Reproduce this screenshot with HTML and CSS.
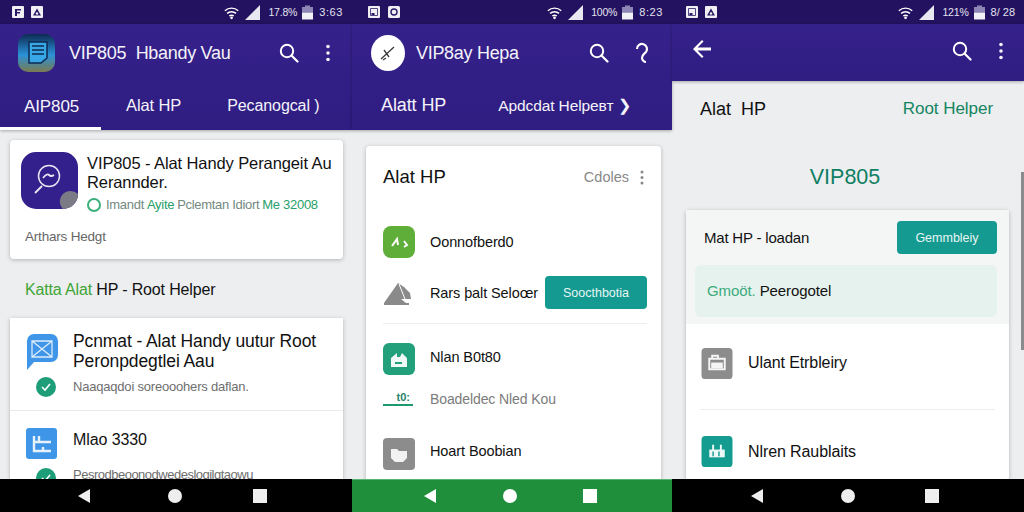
FILE: index.html
```html
<!DOCTYPE html>
<html lang="id">
<head>
<meta charset="utf-8">
<title>VIP805</title>
<link rel="stylesheet" href="styles.css">
</head>
<body>
<svg class="defs" width="0" height="0" aria-hidden="true">
  <symbol id="wifi" viewBox="0 0 18 16"><path d="M1 6a11 11 0 0 1 15 0M3.500 9a7.500 7.500 0 0 1 10 0M6 12a4 4 0 0 1 5 0" fill="none" stroke="#fff" stroke-width="1.600"/><circle cx="8.500" cy="14" r="1.500" fill="#fff"/></symbol>
  <symbol id="signal" viewBox="0 0 16 16"><path d="M0 16 16 0v16z" fill="#e8e8f0"/></symbol>
  <symbol id="battery" viewBox="0 0 11 14"><path d="M3 0h5v1.500h3V7H0V1.500h3z" fill="#8d86b4"/><path d="M0 7h11v7H0z" fill="#f2f2f6"/></symbol>
  <symbol id="search" viewBox="0 0 20 20"><circle cx="8" cy="8" r="6.200" fill="none" stroke="#fff" stroke-width="2"/><path d="m12.500 12.500 6 6" stroke="#fff" stroke-width="2.200" stroke-linecap="round"/></symbol>
  <symbol id="dots" viewBox="0 0 4 18"><circle cx="2" cy="2.500" r="1.800" fill="currentColor"/><circle cx="2" cy="9" r="1.800" fill="currentColor"/><circle cx="2" cy="15.500" r="1.800" fill="currentColor"/></symbol>
  <symbol id="back" viewBox="0 0 12 12"><path d="M0 6 6 0l1 1-4 4h9v2H3l4 4-1 1z" fill="#fff"/></symbol>
  <symbol id="tri" viewBox="0 0 12 14"><path d="M12 0v14L0 7z" fill="currentColor"/></symbol>
  <symbol id="n1" viewBox="0 0 12 12"><rect width="12" height="12" rx="1" fill="#f0f0f4"/><path d="M3 3h6v1.500H5V6h3v1.500H5V10H3z" fill="#2a1a66"/></symbol>
  <symbol id="n2" viewBox="0 0 12 12"><rect width="12" height="12" rx="1" fill="#f0f0f4"/><path d="M6 2.500 10 9.500H2z" fill="#2a1a66"/><circle cx="6" cy="7.500" r="1.200" fill="#f0f0f4"/></symbol>
  <symbol id="n3" viewBox="0 0 12 12"><rect width="12" height="12" rx="1" fill="#f0f0f4"/><path d="M2.500 2.500h7v7h-7z" fill="none" stroke="#2a1a66" stroke-width=".8"/><path d="M3.500 7h3v2h-3z" fill="#2a1a66"/></symbol>
  <symbol id="n4" viewBox="0 0 12 12"><rect width="12" height="12" rx="1.500" fill="#f0f0f4"/><circle cx="6" cy="6" r="3" fill="none" stroke="#2a1a66" stroke-width="1.400"/></symbol>
</svg>

<main class="screens">
  <section class="phone">
    <header class="status">
      <div class="status-left"><svg class="note"><use href="#n1"/></svg><svg class="note"><use href="#n2"/></svg></div>
      <div class="status-right">
        <svg class="i-wifi"><use href="#wifi"/></svg>
        <svg class="i-signal"><use href="#signal"/></svg>
        <span class="st-text">17.8%</span>
        <svg class="i-batt"><use href="#battery"/></svg>
        <span class="st-text st-time">3:63</span>
      </div>
    </header>
    <div class="appbar">
      <div class="titlebar tb1">
        <svg class="logo-square" viewBox="0 0 37 38"><defs><linearGradient id="lg" x1="0" y1="0" x2="0" y2="1"><stop offset="0" stop-color="#0d2a52"/><stop offset=".55" stop-color="#2a92d8"/><stop offset="1" stop-color="#7a7a50"/></linearGradient></defs><rect width="37" height="38" rx="10" fill="url(#lg)"/><path d="M11 8h18v16l-6 5H11z" fill="#38a7e6" stroke="#0d2a52" stroke-width="1.500"/><path d="M14 12h12M14 16h12M14 20h12" stroke="#0d2a52" stroke-width="1.600"/></svg>
        <h1 class="app-title at1">VIP805&nbsp; Hbandy Vau</h1>
        <svg class="i-search s1"><use href="#search"/></svg>
        <svg class="i-dots d1"><use href="#dots"/></svg>
      </div>
      <nav class="tabs tabs1">
        <span class="tab tab-active">AIP805</span>
        <span class="tab t12">Alat HP</span>
        <span class="tab t13">Pecanogcal )</span>
      </nav>
    </div>
    <div class="content c1">
      <article class="card hero">
        <div class="hero-row">
          <svg class="hero-icon" viewBox="0 0 57 57"><rect width="57" height="57" rx="15" fill="#34208c"/><circle cx="28" cy="24" r="10.500" fill="none" stroke="#e8e6f4" stroke-width="1.500"/><path d="M22 26q4-5 6-3t5 0M21 34l-7 7" fill="none" stroke="#e8e6f4" stroke-width="1.800"/><path d="M57 42a15 15 0 0 1-15 15 10 10 0 0 1 15-15z" fill="#7b7b86"/></svg>
          <div class="hero-text">
            <h2 class="hero-title">VIP805 - Alat Handy Perangeit Au Rerannder.</h2>
            <p class="hero-meta"><span class="ring"></span><span class="muted-g">Imandt</span> <span class="green">Ayite</span> <span class="muted-g">Pclemtan Idiort</span> <span class="green">Me 32008</span></p>
          </div>
        </div>
        <p class="hero-foot">Arthars Hedgt</p>
      </article>
      <h3 class="kata"><span class="kata-g">Katta Alat</span> HP - Root Helper</h3>
      <article class="card list1">
        <div class="row1 row1-a">
          <div class="col-icons icons-a">
            <svg class="mail" viewBox="0 0 33 38"><path d="M8 1h17a7 7 0 0 1 7 7v14a7 7 0 0 1-7 7H8l-7 8V8a7 7 0 0 1 7-7z" fill="#3f96e8"/><path d="M6 8h20v16H6zM6 8l20 16M26 8 6 24" fill="none" stroke="#dcecfb" stroke-width="1.300"/></svg>
            <span class="check"><svg viewBox="0 0 20 20"><path d="m6 10 3 3 5-6" fill="none" stroke="#fff" stroke-width="1.600"/></svg></span>
          </div>
          <div class="row-body">
            <h2 class="row-title">Pcnmat - Alat Handy uutur Root Peronpdegtlei Aau</h2>
            <p class="row-sub">Naaqaqdoi soreooohers daflan.</p>
          </div>
        </div>
        <div class="row1 row1-b">
          <div class="col-icons">
            <svg class="sq-blue" viewBox="0 0 31 31"><rect width="31" height="31" rx="3" fill="#3f96e8"/><path d="M8 8v15h17M8 14h5V8M13 14h12M17 23v-4" fill="none" stroke="#e6f1fc" stroke-width="2.400"/></svg>
            <span class="check check-b"><svg viewBox="0 0 20 20"><path d="m6 10 3 3 5-6" fill="none" stroke="#fff" stroke-width="1.600"/></svg></span>
          </div>
          <div class="row-body">
            <h2 class="row-title r-mlan">Mlao 3330</h2>
            <p class="row-sub">Pesrodbeoonodwedesloqilqtaowu</p>
          </div>
        </div>
      </article>
    </div>
    <footer class="navbar"><svg class="n-tri"><use href="#tri"/></svg><span class="n-dot"></span><span class="n-sq"></span></footer>
  </section>

  <section class="phone p2">
    <header class="status">
      <div class="status-left sl2"><svg class="note"><use href="#n3"/></svg><svg class="note"><use href="#n4"/></svg></div>
      <div class="status-right sr2">
        <svg class="i-wifi"><use href="#wifi"/></svg>
        <svg class="i-signal"><use href="#signal"/></svg>
        <span class="st-text">100%</span>
        <svg class="i-batt"><use href="#battery"/></svg>
        <span class="st-text st-time">8:23</span>
      </div>
    </header>
    <div class="appbar">
      <div class="titlebar tb2">
        <svg class="logo-round" viewBox="0 0 34 36"><ellipse cx="17" cy="18" rx="17" ry="18" fill="#fff"/><path d="M10 24 23 12M13 15l5 7M12 25l3-2" stroke="#3a3a3a" stroke-width="1.300" fill="none"/></svg>
        <h1 class="app-title at2">VIP8ay Hepa</h1>
        <svg class="i-search s2"><use href="#search"/></svg>
        <svg class="i-help" viewBox="0 0 14 24"><path d="M2 8a5 5 0 1 1 9 3c-2 2-4 3-4 6 0 2 2 4 4 4" fill="none" stroke="#fff" stroke-width="2.200"/></svg>
      </div>
      <nav class="tabs tabs2">
        <span class="tab t21">Alatt HP</span>
        <span class="tab t22">Apdcdat Helpeвт ❯</span>
      </nav>
    </div>
    <div class="content c2">
      <article class="card list2">
        <div class="l2-head">
          <h2 class="l2-title">Alat HP</h2>
          <span class="l2-more">Cdoles</span>
          <svg class="i-dots d2"><use href="#dots"/></svg>
        </div>
        <div class="l2-row lr-a">
          <svg class="tile" viewBox="0 0 32 32"><rect width="32" height="32" rx="8" fill="#5fae3a"/><path d="M9 20l5-7 1 6M21 15l3 4-3 2" fill="none" stroke="#fff" stroke-width="2"/></svg>
          <span class="l2-name">Oonnofberd0</span>
        </div>
        <div class="l2-row lr-b">
          <svg class="tile" viewBox="0 0 32 32"><path d="M1 26 15 6l6 4 6 6 1 6-10 0 5 4z" fill="#8a8a8a"/><path d="M1 27h25" stroke="#8a8a8a" stroke-width="2"/><path d="M16 7l6 15" stroke="#fff" stroke-width="1"/></svg>
          <span class="l2-name">Rars þalt Seloœr</span>
          <button class="btn btn2">Soocthbotia</button>
        </div>
        <div class="l2-row lr-c">
          <svg class="tile" viewBox="0 0 32 32"><rect width="32" height="32" rx="6" fill="#22a07c"/><path d="M8 15l6-5v4h3l2-4 5 5v9H8z" fill="#f0f9f6"/><path d="M12 20h7" stroke="#22a07c" stroke-width="2"/></svg>
          <span class="l2-name name-up">Nlan B0t80</span>
        </div>
        <div class="l2-row lr-d">
          <span class="mini"><span class="mini-t">t0:</span></span>
          <span class="l2-sub">Boadeldec Nled Kou</span>
        </div>
        <div class="l2-row lr-e">
          <svg class="tile" viewBox="0 0 32 32"><rect width="32" height="32" rx="4" fill="#8c8c8c"/><path d="M8 11h6l2 2h8v7l-4 4h-8l-4-4z" fill="#f2f2f2"/></svg>
          <span class="l2-name name-up">Hoart Boobian</span>
        </div>
      </article>
    </div>
    <footer class="navbar nav-green"><svg class="n-tri"><use href="#tri"/></svg><span class="n-dot"></span><span class="n-sq"></span></footer>
  </section>

  <section class="phone p3">
    <header class="status">
      <div class="status-left sl3"><svg class="note"><use href="#n3"/></svg><svg class="note"><use href="#n2"/></svg></div>
      <div class="status-right sr3">
        <svg class="i-wifi"><use href="#wifi"/></svg>
        <svg class="i-signal"><use href="#signal"/></svg>
        <span class="st-text">121%</span>
        <svg class="i-batt"><use href="#battery"/></svg>
        <span class="st-text st-time st-t3">8/ 28</span>
      </div>
    </header>
    <div class="appbar ab3">
      <svg class="i-back"><use href="#back"/></svg>
      <svg class="i-search s3"><use href="#search"/></svg>
      <svg class="i-dots d3"><use href="#dots"/></svg>
    </div>
    <div class="content c3">
      <div class="c3-head"><span class="c3-title">Alat&nbsp; HP</span><span class="c3-link">Root Helper</span></div>
      <h2 class="c3-vip">VIP805</h2>
      <article class="card list3">
        <div class="l3-top">
          <div class="l3-line"><span class="l3-name">Mat HP - loadan</span><button class="btn btn3">Gemmbleiy</button></div>
          <div class="l3-note"><span class="green l3-g">Gmoöt.</span> <span class="l3-p">Peerogotel</span></div>
        </div>
        <div class="l3-row l3-a">
          <svg class="tile3" viewBox="0 0 32 32"><rect width="32" height="32" rx="4" fill="#8c8c8c"/><path d="M8 11h16v11H8zM11 11V8h6v3" fill="none" stroke="#f4f4f4" stroke-width="2"/><path d="M10 15h12v6H10z" fill="#f4f4f4"/></svg>
          <span class="l2-name l3-text">Ulant Etrbleiry</span>
        </div>
        <div class="l3-row l3-b">
          <svg class="tile3" viewBox="0 0 32 32"><rect width="32" height="32" rx="4" fill="#159c90"/><path d="M8 14h16v8H8z" fill="#eef8f7"/><path d="M12 9v6M20 9v6M13 15v6M19 15v6" stroke="#eef8f7" stroke-width="2"/><path d="M12 16v5M18 16v5" stroke="#159c90" stroke-width="1.500"/></svg>
          <span class="l2-name l3-text">Nlren Raublaits</span>
        </div>
      </article>
      <span class="scroll"></span>
    </div>
    <footer class="navbar"><svg class="n-tri"><use href="#tri"/></svg><span class="n-dot"></span><span class="n-sq"></span></footer>
  </section>
</main>
</body>
</html>
```

FILE: styles.css
```css
* { box-sizing: border-box; }
html, body { margin: 0; height: 100%; overflow: hidden; }
body { font-family: "Liberation Sans", Arial, sans-serif; background: #000; color: #111; }
h1, h2, h3, p { margin: 0; font-weight: 400; }
.defs { position: absolute; }

.screens { display: flex; width: 1024px; height: 512px; }
.phone { display: flex; flex-direction: column; width: 352px; height: 512px; flex: none; }
.p2 { width: 320px; }

/* status bar */
.status { height: 24px; background: #23125f; display: flex; align-items: center; justify-content: space-between; padding: 0 9px 0 12px; flex: none; }
.status-left { display: flex; gap: 7px; }
.sl2 { gap: 8px; padding-left: 4px; }
.sl3 { gap: 7px; padding-left: 2px; }
.note { width: 12px; height: 12px; display: block; }
.status-right { display: flex; align-items: center; color: #e4e2f0; font-size: 10.500px; }
.i-wifi { width: 16px; height: 15px; margin-right: 5px; }
.i-signal { width: 15px; height: 15px; margin-right: 8px; }
.st-text { letter-spacing: -.2px; }
.i-batt { width: 11px; height: 15px; margin: 0 6px 0 5px; }
.st-time { font-size: 11px; letter-spacing: .6px; }
.st-t3 { letter-spacing: 0; }

/* app bar */
.appbar { background: linear-gradient(#35218a, #2f1d82); height: 106px; flex: none; display: flex; flex-direction: column; position: relative; z-index: 1; box-shadow: 0 1px 3px rgba(0,0,0,.3); }
.titlebar { height: 62px; display: flex; align-items: center; color: #fff; padding-top: 2px; }
.tb1 { padding-left: 18px; padding-bottom: 6px; }
.logo-square { width: 37px; height: 38px; flex: none; }
.app-title { font-size: 18px; color: #f4f3fa; white-space: nowrap; flex: 1; letter-spacing: -.3px; }
.at1 { margin-left: 14px; }
.i-search { width: 20px; height: 20px; flex: none; }
.s1 { margin-right: 27px; }
.i-dots { width: 4px; height: 18px; flex: none; color: #f4f3fa; }
.d1 { margin-right: 22px; }
.tb2 { padding-left: 19px; padding-bottom: 6px; }
.logo-round { width: 34px; height: 36px; flex: none; }
.at2 { margin-left: 11px; }
.s2 { margin-right: 26px; }
.i-help { width: 14px; height: 24px; margin-right: 23px; }

.tabs { display: flex; align-items: center; flex: 1; font-size: 16.500px; color: #f4f3fa; white-space: nowrap; position: relative; }
.tab { display: block; letter-spacing: -.1px; }
.tabs1 { padding-bottom: 5px; }
.tab-active { width: 101px; padding-left: 24px; align-self: stretch; line-height: 41px; border-bottom: 3px solid #fff; margin-bottom: -5px; font-size: 17px; }
.t12 { margin-left: 25px; }
.t13 { margin-left: 46px; font-size: 16px; }
.tabs2 { padding: 0 0 5px 29px; }
.t21 { font-size: 18px; }
.t22 { margin-left: 52px; font-size: 15.500px; }

.ab3 { height: 57px; flex-direction: row; align-items: center; padding: 0 0 4px 21px; }
.i-back { width: 18px; height: 18px; margin-right: 241px; margin-top: -4px; }
.s3 { margin-right: 27px; }

/* content */
.content { flex: 1; min-height: 0; overflow: hidden; background: #eceef0; position: relative; }
.card { background: #fff; box-shadow: 0 1px 4px rgba(0,0,0,.25); }
.c1 { padding: 10px 9px 0 10px; }
.hero { height: 119px; border-radius: 4px; padding: 12px 11px; }
.hero-row { display: flex; gap: 9px; }
.hero-icon { width: 57px; height: 57px; flex: none; }
.hero-title { font-size: 16.500px; line-height: 19px; padding-top: 2px; letter-spacing: -.1px; }
.hero-meta { font-size: 13px; margin-top: 5px; color: #777; display: flex; align-items: center; gap: 3px; white-space: nowrap; letter-spacing: -.3px; }
.ring { width: 14px; height: 14px; border: 2px solid #3bb07a; border-radius: 50%; flex: none; margin-right: 2px; }
.muted-g { color: #73897f; }
.green { color: #27a06b; }
.hero-foot { font-size: 13.500px; color: #666; margin: 17px 0 0 4px; letter-spacing: -.2px; }
.kata { font-size: 16px; margin: 21px 0 0 15px; line-height: 20px; letter-spacing: -.15px; }
.kata-g { color: #3fa535; }
.list1 { margin-top: 18px; height: 180px; }
.row1 { display: flex; padding: 0 16px; }
.row1-a { height: 93px; border-bottom: 1px solid #eaeaea; padding-top: 10px; }
.row1-b { padding-top: 17px; }
.col-icons { width: 47px; flex: none; display: flex; flex-direction: column; align-items: flex-start; }
.icons-a { padding-top: 5px; }
.mail { width: 33px; height: 38px; }
.sq-blue { width: 31px; height: 31px; }
.check { width: 20px; height: 20px; border-radius: 50%; background: #1d9d78; margin: 6px 0 0 10px; display: block; flex: none; }
.check-b { margin-top: 9px; }
.check svg { display: block; width: 20px; height: 20px; }
.row-title { font-size: 17.500px; line-height: 20px; padding-top: 3px; letter-spacing: -.1px; }
.row-sub { font-size: 13px; color: #6e6e6e; margin-top: 8px; white-space: nowrap; letter-spacing: -.2px; }
.r-mlan { font-size: 16px; padding-top: 2px; }
.row1-b .row-sub { margin-top: 17px; letter-spacing: -.5px; }

.c2 { padding: 16px 11px 0 14px; }
.list2 { border-radius: 4px; height: 340px; padding: 0 14px 0 17px; }
.l2-head { display: flex; align-items: center; height: 62px; }
.l2-title { font-size: 18.500px; flex: 1; color: #111; }
.l2-more { font-size: 14.500px; color: #888; margin-right: 11px; }
.d2 { color: #888; height: 15px; margin-right: 3px; }
.l2-row { display: flex; align-items: center; }
.tile { width: 32px; height: 32px; flex: none; }
.l2-name { font-size: 14.500px; margin-left: 15px; white-space: nowrap; flex: 1; color: #111; letter-spacing: -.1px; }
.name-up { padding-bottom: 5px; }
.lr-a { height: 32px; margin-top: 18px; }
.lr-b { height: 33px; margin-top: 18px; }
.btn { border: 0; border-radius: 4px; background: #149a90; color: #e8f6f4; font: 12.500px "Liberation Sans", Arial, sans-serif; flex: none; padding: 0; }
.btn2 { width: 102px; height: 33px; }
.lr-c { margin-top: 14px; border-top: 1px solid #eeeeee; padding-top: 19px; height: 52px; }
.lr-d { height: 20px; margin-top: 14px; }
.mini { width: 30px; border-bottom: 2px solid #1f9a70; height: 14px; display: block; text-align: right; font-size: 11px; line-height: 10px; font-weight: 700; color: #27856a; padding-right: 3px; }
.l2-sub { font-size: 14px; color: #7b7b7b; margin-left: 17px; letter-spacing: -.1px; }
.lr-e { height: 31px; margin-top: 29px; }

.c3 { padding: 0 15px 0 14px; }
.c3-head { display: flex; justify-content: space-between; align-items: center; height: 56px; padding: 0 16px 0 14px; }
.c3-title { font-size: 18px; color: #111; }
.c3-link { font-size: 17px; color: #14855f; letter-spacing: -.05px; }
.c3-vip { font-size: 21.500px; text-align: center; color: #0f7f63; line-height: 26px; margin-top: 27px; padding-right: 5px; }
.list3 { margin-top: 20px; height: 270px; border-radius: 3px; }
.l3-top { background: #f4f6f6; height: 114px; padding: 11px 12px 0 9px; }
.l3-line { display: flex; justify-content: space-between; align-items: center; }
.l3-name { font-size: 15px; padding-left: 9px; letter-spacing: -.2px; }
.btn3 { width: 100px; height: 33px; }
.l3-note { background: #e6f2ed; height: 52px; border-radius: 6px; margin-top: 11px; font-size: 15px; line-height: 52px; padding-left: 12px; letter-spacing: -.1px; }
.l3-g { color: #3cab7c; }
.l3-row { display: flex; align-items: center; padding-left: 15px; }
.tile3 { width: 32px; height: 31px; flex: none; }
.l3-text { font-size: 16px; margin-left: 15px; }
.l3-a { padding-top: 24px; height: 86px; position: relative; align-items: flex-start; }
.l3-a::after { content: ""; position: absolute; left: 14px; right: 14px; bottom: 0; border-bottom: 1px solid #eeeeee; }
.l3-a .l3-text { line-height: 30px; }
.l3-b { margin-top: 26px; }
.scroll { position: absolute; right: 0; top: 91px; width: 3px; height: 178px; background: #8b8b8b; }

/* nav */
.navbar { height: 33px; flex: none; background: #000; display: flex; align-items: center; position: relative; z-index: 2; color: #eee; padding-left: 78px; }
.nav-green { background: #1f8f3b; border-top: 1px solid #58b573; padding-left: 72px; color: #fff; }
.n-tri { width: 12px; height: 14px; flex: none; }
.n-dot { width: 14px; height: 14px; border-radius: 50%; background: currentColor; margin-left: 78px; flex: none; }
.n-sq { width: 14px; height: 14px; background: currentColor; margin-left: 71px; flex: none; }
.nav-green .n-dot { margin-left: 67px; }
.nav-green .n-sq { margin-left: 66px; }
.p3 .navbar { padding-left: 79px; }
.p3 .n-dot { margin-left: 78px; }
.p3 .n-sq { margin-left: 70px; }
```
